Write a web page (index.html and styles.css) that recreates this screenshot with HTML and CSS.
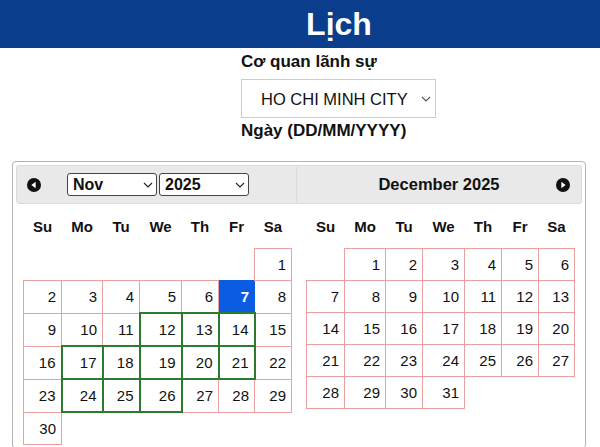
FILE: index.html
```html
<!DOCTYPE html>
<html lang="vi">
<head>
    <meta charset="UTF-8">
    <meta name="viewport" content="width=device-width, initial-scale=1.0">
    <title>Lịch</title>
    <link rel="stylesheet" href="styles.css">
</head>
<body>
    <header class="topbar">
        <h1 class="title">Lịch</h1>
    </header>

    <div class="form">
        <label class="field-label" for="post">Cơ quan lãnh sự</label>
        <div class="select-wrap post-wrap">
            <select id="post" class="post-select">
                <option>HO CHI MINH CITY</option>
            </select>
            <svg class="chevron post-chevron" width="10" height="6" viewBox="0 0 10 6"><polyline points="1,1 5,5 9,1" fill="none" stroke="#555" stroke-width="1.1"/></svg>
        </div>
        <label class="field-label date-label">Ngày (DD/MM/YYYY)</label>
    </div>

    <div class="datepicker">
        <div class="month month-first">
            <div class="month-header header-first">
                <svg class="nav-icon prev" width="14" height="14" viewBox="0 0 14 14"><circle cx="7" cy="7" r="7" fill="#111"/><polygon points="8.6,3.8 4.4,7 8.6,10.2" fill="#fff"/></svg>
                <div class="select-wrap small-wrap month-wrap">
                    <select class="small-select"><option>Nov</option></select>
                    <svg class="chevron small-chevron" width="10" height="6" viewBox="0 0 10 6"><polyline points="1,1 5,5 9,1" fill="none" stroke="#222" stroke-width="1.1"/></svg>
                </div>
                <div class="select-wrap small-wrap year-wrap">
                    <select class="small-select"><option>2025</option></select>
                    <svg class="chevron small-chevron" width="10" height="6" viewBox="0 0 10 6"><polyline points="1,1 5,5 9,1" fill="none" stroke="#222" stroke-width="1.1"/></svg>
                </div>
            </div>
            <table class="days">
                <colgroup><col class="c1"><col class="c2"><col class="c3"><col class="c4"><col class="c5"><col class="c6"><col class="c7"></colgroup>
                <thead>
                    <tr><th>Su</th><th>Mo</th><th>Tu</th><th>We</th><th>Th</th><th>Fr</th><th>Sa</th></tr>
                </thead>
                <tbody>
                    <tr><td class="empty"></td><td class="empty"></td><td class="empty"></td><td class="empty"></td><td class="empty"></td><td class="empty"></td><td class="day">1</td></tr>
                    <tr><td class="day">2</td><td class="day">3</td><td class="day">4</td><td class="day">5</td><td class="day">6</td><td class="day today">7</td><td class="day">8</td></tr>
                    <tr><td class="day">9</td><td class="day">10</td><td class="day">11</td><td class="day open">12</td><td class="day open">13</td><td class="day open">14</td><td class="day">15</td></tr>
                    <tr><td class="day">16</td><td class="day open">17</td><td class="day open">18</td><td class="day open">19</td><td class="day open">20</td><td class="day open">21</td><td class="day">22</td></tr>
                    <tr><td class="day">23</td><td class="day open">24</td><td class="day open">25</td><td class="day open">26</td><td class="day">27</td><td class="day">28</td><td class="day">29</td></tr>
                    <tr><td class="day">30</td><td class="empty"></td><td class="empty"></td><td class="empty"></td><td class="empty"></td><td class="empty"></td><td class="empty"></td></tr>
                </tbody>
            </table>
        </div>

        <div class="month month-last">
            <div class="month-header header-last">
                <span></span>
                <span class="month-title">December 2025</span>
                <svg class="nav-icon next" width="14" height="14" viewBox="0 0 14 14"><circle cx="7" cy="7" r="7" fill="#111"/><polygon points="5.4,3.8 9.6,7 5.4,10.2" fill="#fff"/></svg>
            </div>
            <table class="days">
                <colgroup><col class="c1"><col class="c2"><col class="c3"><col class="c4"><col class="c5"><col class="c6b"><col class="c7b"></colgroup>
                <thead>
                    <tr><th>Su</th><th>Mo</th><th>Tu</th><th>We</th><th>Th</th><th>Fr</th><th>Sa</th></tr>
                </thead>
                <tbody>
                    <tr><td class="empty"></td><td class="day">1</td><td class="day">2</td><td class="day">3</td><td class="day">4</td><td class="day">5</td><td class="day">6</td></tr>
                    <tr><td class="day">7</td><td class="day">8</td><td class="day">9</td><td class="day">10</td><td class="day">11</td><td class="day">12</td><td class="day">13</td></tr>
                    <tr><td class="day">14</td><td class="day">15</td><td class="day">16</td><td class="day">17</td><td class="day">18</td><td class="day">19</td><td class="day">20</td></tr>
                    <tr><td class="day">21</td><td class="day">22</td><td class="day">23</td><td class="day">24</td><td class="day">25</td><td class="day">26</td><td class="day">27</td></tr>
                    <tr><td class="day">28</td><td class="day">29</td><td class="day">30</td><td class="day">31</td><td class="empty"></td><td class="empty"></td><td class="empty"></td></tr>
                </tbody>
            </table>
        </div>
    </div>
</body>
</html>
```

FILE: styles.css
```css
body {
    margin: 0;
    font-family: "Liberation Sans", Arial, sans-serif;
    color: #111;
    background: #fff;
}
.topbar {
    background: #0a3d8c;
    height: 48px;
}
.title {
    margin: 0;
    padding-left: 78px;
    text-align: center;
    color: #fff;
    font-size: 32px;
    font-weight: bold;
    line-height: 48px;
}
.form {
    margin-left: 241px;
    padding-top: 4px;
}
.field-label {
    display: block;
    font-size: 17px;
    font-weight: bold;
    line-height: 20px;
}
.date-label {
    margin-top: 3px;
}
.select-wrap {
    position: relative;
    display: inline-block;
}
.chevron {
    position: absolute;
    pointer-events: none;
}
.post-wrap {
    margin-top: 7px;
}
.post-select {
    appearance: none;
    -webkit-appearance: none;
    width: 195px;
    height: 39px;
    border: 1px solid #ccc;
    border-radius: 0;
    background: #fff;
    padding: 0 0 0 19px;
    font-family: inherit;
    font-size: 16.5px;
    color: #111;
    display: block;
}
.post-chevron {
    right: 5px;
    top: 17px;
}
.datepicker {
    margin: 20px 14px 0 12px;
    border: 1px solid #b4b4b4;
    border-radius: 4px;
    padding: 3px;
    display: flex;
}
.month-first {
    width: 281px;
}
.month-last {
    flex: 1;
}
.month-header {
    height: 37px;
    background: #e9e9e9;
    border: 1px solid #dcdcdc;
    display: flex;
    align-items: center;
}
.header-first {
    border-radius: 3px 0 0 3px;
}
.header-last {
    border-left: none;
    border-radius: 0 3px 3px 0;
    display: grid;
    grid-template-columns: 1fr auto 1fr;
}
.nav-icon {
    display: block;
}
.prev {
    margin: 0 26px 0 10px;
}
.next {
    justify-self: end;
    margin-right: 11px;
}
.month-title {
    font-size: 16.5px;
    font-weight: bold;
}
.year-wrap {
    margin-left: 2px;
}
.small-select {
    appearance: none;
    -webkit-appearance: none;
    width: 90px;
    height: 23px;
    border: 1px solid #444;
    border-radius: 3px;
    background: #fff;
    padding: 0 0 0 5px;
    font-family: inherit;
    font-size: 16px;
    font-weight: bold;
    color: #111;
    display: block;
}
.small-chevron {
    right: 4px;
    top: 9px;
}
.days {
    border-collapse: collapse;
    table-layout: fixed;
    width: 268px;
}
.month-first .days {
    margin-left: 7px;
}
.month-last .days {
    margin-left: 9px;
}
.c1 { width: 38px; }
.c2 { width: 41px; }
.c3 { width: 37px; }
.c4 { width: 42px; }
.c5 { width: 37px; }
.c6 { width: 36px; }
.c7 { width: 37px; }
.c6b { width: 37px; }
.c7b { width: 36px; }
.days th {
    height: 44px;
    padding: 0;
    font-size: 15px;
    font-weight: bold;
    text-align: center;
}
.days td {
    height: 31px;
    padding: 0 5px 0 0;
    font-size: 15px;
    text-align: right;
    vertical-align: middle;
}
.days .day {
    border: 1px solid #eaa0a0;
}
.days .open {
    border: 2px solid #2c7a2c;
}
.days .today {
    border: 1px solid #0b5ce3;
    background: #0b5ce3;
    color: #fff;
    font-weight: bold;
}
```
